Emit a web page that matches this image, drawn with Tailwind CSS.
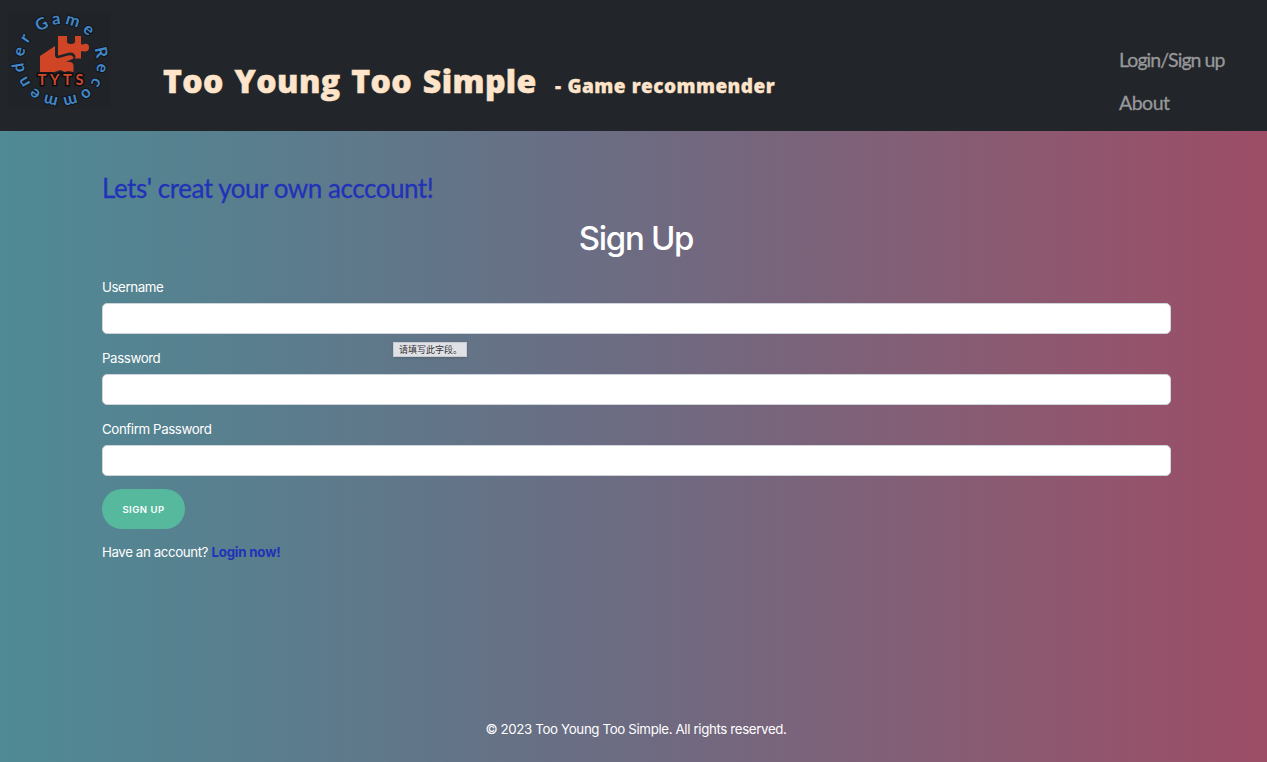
<!DOCTYPE html>
<html lang="en">
<head>
<meta charset="utf-8">
<title>Too Young Too Simple</title>
<script src="https://cdn.jsdelivr.net/npm/@tailwindcss/browser@4"></script>
</head>
<body class="h-[762px] overflow-hidden flex flex-col text-white text-[13.3px] tracking-[-0.4px] font-['Inter','Noto_Sans_CJK_SC',sans-serif] bg-[linear-gradient(90deg,#4f8a95_0%,#5c7b8c_25%,#6d6b82_50%,#865d74_75%,#9d4d66_100%)]">
<header class="h-[131px] shrink-0 bg-[#222529] flex font-['Lato',sans-serif]">
  <svg class="w-[130px] h-[130px] shrink-0 tracking-normal" viewBox="0 0 130 130">
    <rect x="8.500" y="12" width="102" height="97" fill="#202327"/>
    <path fill="#d04526" d="M58 36h9v4q-1 4 4 4t4-4v-4h6v8q1 1 3 0 5-1 5 3.500t-5 4q-2-1-3 0v7h-6q-1-6-8-5l-9 3v-4z"/>
    <path fill="#d04526" d="M40 56l15-10v10q1 3 4 2l9-2.500q5-1 5.500 3l-8 3.500q7-1 8 3v7l-5-1-4 1-4-2-6 2H40z"/>
    <path d="M56 46v9q1 2 4 1l9-2.500q5-1 6 4" fill="none" stroke="#202327" stroke-width="1.600"/>
    <text x="62.400" y="84.500" text-anchor="middle" font-size="14.500" font-weight="700" letter-spacing="3.700" fill="#d04a2b" stroke="#0c0e11" stroke-width="3" paint-order="stroke">TYTS</text>
    <g font-size="16.500" font-weight="700" text-anchor="middle" fill="#4387c9" stroke="#10161d" stroke-width="2" paint-order="stroke">
      <text transform="translate(60.500 61) rotate(-27)" y="-36">G</text>
      <text transform="translate(60.500 61) rotate(-6)" y="-37">a</text>
      <text transform="translate(60.500 61) rotate(17)" y="-37">m</text>
      <text transform="translate(60.500 61) rotate(42)" y="-37">e</text>
      <text transform="translate(60.500 61) rotate(78)" y="-36">R</text>
      <text transform="translate(60.500 61) rotate(100)" y="-37">e</text>
      <text transform="translate(60.500 61) rotate(121)" y="-37">c</text>
      <text transform="translate(60.500 61) rotate(142)" y="-37">o</text>
      <text transform="translate(60.500 61) rotate(166)" y="-36">m</text>
      <text transform="translate(60.500 61) rotate(194)" y="-36">m</text>
      <text transform="translate(60.500 61) rotate(218)" y="-37">e</text>
      <text transform="translate(60.500 61) rotate(240)" y="-37">n</text>
      <text transform="translate(60.500 61) rotate(261)" y="-37">d</text>
      <text transform="translate(60.500 61) rotate(283)" y="-37">e</text>
      <text transform="translate(60.500 61) rotate(303)" y="-37">r</text>
    </g>
  </svg>
  <h1 class="ml-[33px] pt-[59px] flex items-baseline font-['Open_Sans',sans-serif] font-extrabold text-[#fee4ca] whitespace-nowrap">
    <span class="w-[392px] text-[32px] leading-[44px] tracking-[0.4px] [word-spacing:2px] [-webkit-text-stroke:0.5px_#fee4ca]">Too Young Too Simple</span>
    <span class="text-[19px] leading-[44px] tracking-[0.45px] [word-spacing:0.5px] [-webkit-text-stroke:0.3px_#fee4ca]">- Game recommender</span>
  </h1>
  <nav class="ml-auto w-[148px] pt-[38px] flex flex-col text-[19.5px] tracking-[-0.95px] leading-[43px] text-[#97989a] whitespace-nowrap [-webkit-text-stroke:0.3px_#97989a]">
    <a>Login/Sign up</a>
    <a class="tracking-[-0.5px]">About</a>
  </nav>
</header>
<main class="relative w-[1069px] ml-[102px] pt-[37px] grow flex flex-col">
  <h2 class="font-['Lato',sans-serif] text-[26px] leading-[40px] tracking-[-0.46px] text-[#2132b8] [-webkit-text-stroke:0.3px_#2132b8]">Lets' creat your own acccount!</h2>
  <h1 class="text-center text-[33px] leading-[40px] font-medium tracking-[-1.3px] mt-[10px] pr-[1px]">Sign Up</h1>
  <label class="mt-[19px] leading-5">Username</label>
  <div class="mt-[6px] h-[31px] rounded-[5px] bg-white border border-[#ced4da]"></div>
  <label class="mt-[14px] leading-5">Password</label>
  <div class="mt-[6px] h-[31px] rounded-[5px] bg-white border border-[#ced4da]"></div>
  <label class="mt-[14px] leading-5">Confirm Password</label>
  <div class="mt-[6px] h-[31px] rounded-[5px] bg-white border border-[#ced4da]"></div>
  <button class="mt-[13px] w-[83px] h-10 pt-[2px] rounded-full bg-[#56b99d] text-[9.500px] font-semibold tracking-[0.500px]">SIGN UP</button>
  <p class="mt-[13px] leading-5">Have an account? <a class="font-bold tracking-[-0.2px] text-[#2132b8]">Login now!</a></p>
  <div class="absolute left-[291px] top-[211px] w-[74px] h-[15px] bg-[#dfe1e6] border border-[#c8ccd2] text-[#333] text-[9px] tracking-normal leading-[13px] pl-[5px] shadow whitespace-nowrap">请填写此字段。</div>
</main>
<footer class="h-[43px] pl-[5px] text-center leading-5 tracking-[-0.36px]">© 2023 Too Young Too Simple. All rights reserved.</footer>
</body>
</html>
